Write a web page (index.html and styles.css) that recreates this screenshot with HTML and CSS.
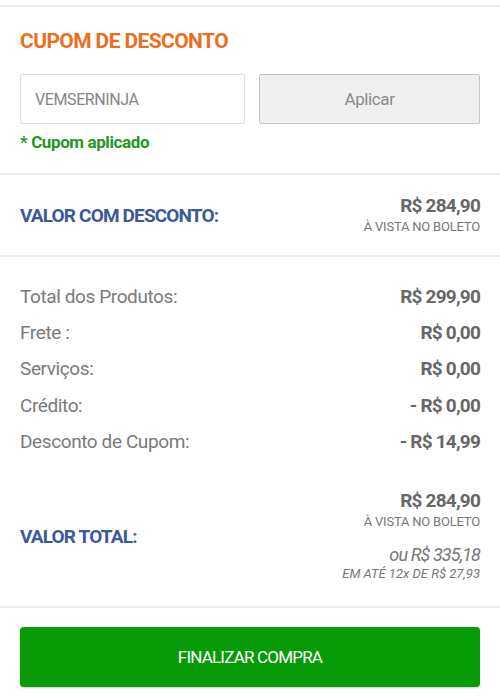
FILE: index.html
```html
<!DOCTYPE html>
<html lang="pt-BR">
<head>
<meta charset="utf-8">
<title>Resumo do pedido</title>
<link rel="stylesheet" href="styles.css">
</head>
<body>
<div class="page">
  <section class="section coupon">
    <h2 class="coupon-title">CUPOM DE DESCONTO</h2>
    <div class="coupon-form">
      <input class="coupon-input" type="text" placeholder="VEMSERNINJA">
      <button class="coupon-btn" type="button">Aplicar</button>
    </div>
    <p class="coupon-ok">* Cupom aplicado</p>
  </section>

  <section class="section discount">
    <div class="label-blue">VALOR COM DESCONTO:</div>
    <div class="price-col">
      <div class="price">R$ 284,90</div>
      <div class="price-sub">À VISTA NO BOLETO</div>
    </div>
  </section>

  <section class="section summary">
    <div class="row"><span class="row-label">Total dos Produtos:</span><span class="row-value">R$ 299,90</span></div>
    <div class="row"><span class="row-label">Frete :</span><span class="row-value">R$ 0,00</span></div>
    <div class="row"><span class="row-label">Serviços:</span><span class="row-value">R$ 0,00</span></div>
    <div class="row"><span class="row-label">Crédito:</span><span class="row-value">- R$ 0,00</span></div>
    <div class="row"><span class="row-label">Desconto de Cupom:</span><span class="row-value">- R$ 14,99</span></div>

    <div class="total">
      <div class="label-blue">VALOR TOTAL:</div>
      <div class="price-col">
        <div class="price">R$ 284,90</div>
        <div class="price-sub">À VISTA NO BOLETO</div>
        <div class="price-alt">ou R$ 335,18</div>
        <div class="price-alt-sub">EM ATÉ 12x DE R$ 27,93</div>
      </div>
    </div>
  </section>

  <section class="section checkout">
    <button class="checkout-btn" type="button">FINALIZAR COMPRA</button>
  </section>
</div>
</body>
</html>
```

FILE: styles.css
```css
* { box-sizing: border-box; }

html, body {
  margin: 0;
  padding: 0;
  background: #fff;
}

body {
  font-family: Roboto, "Liberation Sans", sans-serif;
  color: #777;
}

.page {
  padding-top: 5px;
}

.section {
  border-top: 2px solid #eeeeee;
  padding: 0 20px;
}

/* Coupon */
.coupon {
  padding-top: 22px;
  padding-bottom: 21px;
}

.coupon-title {
  margin: 0;
  font-size: 21px;
  line-height: 24px;
  font-weight: 700;
  color: #ec6f1c;
  letter-spacing: -0.6px;
}

.coupon-form {
  display: grid;
  grid-template-columns: 225px 1fr;
  gap: 14px;
  margin-top: 21px;
}

.coupon-input {
  min-width: 0;
  height: 50px;
  border: 1px solid #dedede;
  border-radius: 2px;
  padding: 0 14px;
  font-family: inherit;
  font-size: 16px;
  letter-spacing: -0.4px;
  color: #777;
  background: #fff;
  outline: none;
}

.coupon-input::placeholder {
  color: #858585;
}

.coupon-btn {
  height: 50px;
  border: 1px solid #c4c4c4;
  border-radius: 2px;
  background: #efefef;
  font-family: inherit;
  font-size: 17px;
  letter-spacing: -0.4px;
  color: #8a8a8a;
}

.coupon-ok {
  margin: 8px 0 0;
  font-size: 17px;
  line-height: 20px;
  font-weight: 700;
  color: #1d9a1d;
  letter-spacing: -0.4px;
}

/* Discount */
.discount {
  display: flex;
  justify-content: space-between;
  align-items: center;
  padding-top: 20px;
  padding-bottom: 20px;
}

.label-blue {
  font-size: 19px;
  font-weight: 700;
  color: #3b5a98;
  letter-spacing: -0.85px;
}

.price-col {
  display: flex;
  flex-direction: column;
  align-items: flex-end;
  text-align: right;
}

.price {
  font-size: 19px;
  line-height: 22px;
  font-weight: 700;
  color: #676767;
  letter-spacing: -0.8px;
}

.price-sub {
  font-size: 13px;
  line-height: 16px;
  margin-top: 2px;
  color: #777;
  letter-spacing: -0.2px;
}

.price-alt {
  margin-top: 14px;
  font-size: 18px;
  line-height: 22px;
  font-style: italic;
  color: #777;
  letter-spacing: -0.9px;
}

.price-alt-sub {
  font-size: 13px;
  line-height: 16px;
  font-style: italic;
  color: #777;
  letter-spacing: 0;
}

/* Summary */
.summary {
  padding-top: 21px;
  padding-bottom: 24px;
}

.row {
  display: flex;
  justify-content: space-between;
  align-items: center;
  height: 36.3px;
}

.row-label {
  font-size: 19px;
  color: #7a7a7a;
  letter-spacing: -0.4px;
}

.row-value {
  font-size: 19px;
  font-weight: 700;
  color: #676767;
  letter-spacing: -0.8px;
}

.total {
  display: flex;
  justify-content: space-between;
  align-items: center;
  margin-top: 31px;
}

/* Checkout */
.checkout {
  padding-top: 19px;
  padding-bottom: 10px;
}

.checkout-btn {
  display: block;
  width: 100%;
  height: 60px;
  border: 0;
  border-radius: 4px;
  background: #089b08;
  box-shadow: 0 1px 2px rgba(0,0,0,0.2);
  color: #fff;
  font-family: inherit;
  font-size: 17px;
  letter-spacing: -0.8px;
}
```
